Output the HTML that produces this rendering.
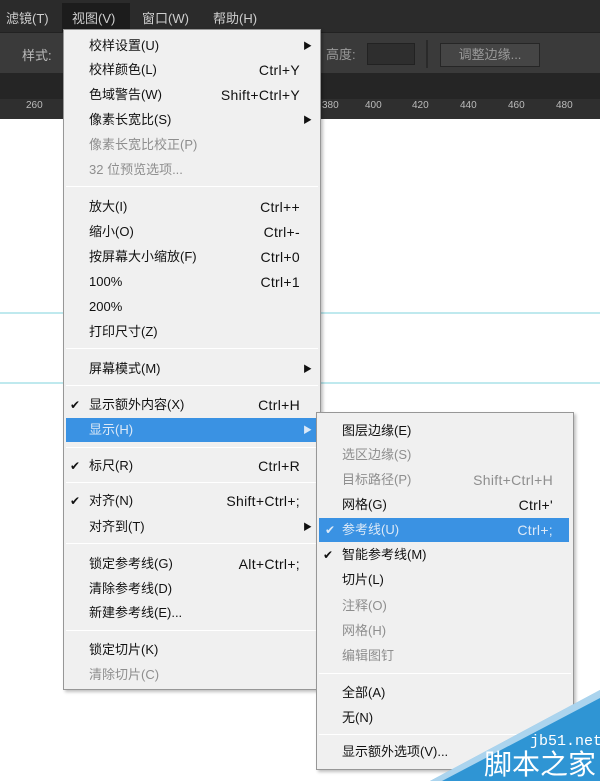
<!DOCTYPE html>
<html><head><meta charset="utf-8"><style>
*{margin:0;padding:0;box-sizing:border-box}
body{width:600px;height:781px;position:relative;overflow:hidden;background:#fff;font-family:"Liberation Sans","Noto Sans CJK SC",sans-serif;font-size:13px}
.abs{position:absolute}
.menu{position:absolute;background:#f0f0f0;border:1px solid #979797;box-shadow:2px 2px 3px rgba(0,0,0,.25)}
.it{position:absolute;left:0;right:0;height:22px;line-height:22px;color:#111;white-space:nowrap}
.it .t{position:absolute;left:25px}
.it .k{position:absolute;right:20px;font-size:14px;letter-spacing:0.3px}
.it .a{position:absolute;right:8px;font-size:9px}
.it .c{position:absolute;left:6px;font-size:12px}
.dis{color:#8e8e8e}
.hl{background:#3a92e3;color:#dce9f7}
.sep{position:absolute;left:2px;right:2px;height:1px;background:#a0a0a0;border-bottom:1px solid #fff}
.tk{position:absolute;top:100px;font-size:10px;color:#bbb}
</style></head><body>
<div class="abs" style="left:0;top:0;width:600px;height:32px;background:#2b2b2b"></div>
<div class="abs" style="left:62px;top:3px;width:68px;height:29px;background:#1c1c1c"></div>
<div class="abs" style="left:6px;top:8px;color:#cfcfcf;font-size:13px">滤镜(T)</div>
<div class="abs" style="left:72px;top:8px;color:#cfcfcf;font-size:13px">视图(V)</div>
<div class="abs" style="left:142px;top:8px;color:#cfcfcf;font-size:13px">窗口(W)</div>
<div class="abs" style="left:213px;top:8px;color:#cfcfcf;font-size:13px">帮助(H)</div>
<div class="abs" style="left:0;top:32px;width:600px;height:41px;background:#3a3a3a;border-top:1px solid #222"></div>
<div class="abs" style="left:22px;top:45px;color:#bbb">样式:</div>
<div class="abs" style="left:326px;top:44px;color:#999">高度:</div>
<div class="abs" style="left:367px;top:43px;width:48px;height:22px;background:#2e2e2e;border:1px solid #222"></div>
<div class="abs" style="left:426px;top:40px;width:2px;height:28px;background:#2a2a2a"></div>
<div class="abs" style="left:440px;top:43px;width:100px;height:24px;background:#454545;border:1px solid #262626;color:#999;text-align:center;line-height:22px">调整边缘...</div>
<div class="abs" style="left:0;top:73px;width:600px;height:26px;background:#252525"></div>
<div class="abs" style="left:0;top:99px;width:600px;height:20px;background:#2f2f2f"></div>
<div class="tk" style="left:26px">260</div>
<div class="tk" style="left:322px">380</div><div class="tk" style="left:365px">400</div><div class="tk" style="left:412px">420</div><div class="tk" style="left:460px">440</div><div class="tk" style="left:508px">460</div><div class="tk" style="left:556px">480</div>
<div class="abs" style="left:0;top:312px;width:600px;height:2px;background:#bfe9ee"></div>
<div class="abs" style="left:0;top:382px;width:600px;height:2px;background:#bfe9ee"></div>

<div class="menu" style="left:63px;top:29px;width:258px;height:661px">
<div class="it" style="top:5px"><span class="t">校样设置(U)</span><span class="a">▶</span></div>
<div class="it" style="top:29px"><span class="t">校样颜色(L)</span><span class="k">Ctrl+Y</span></div>
<div class="it" style="top:54px"><span class="t">色域警告(W)</span><span class="k">Shift+Ctrl+Y</span></div>
<div class="it" style="top:79px"><span class="t">像素长宽比(S)</span><span class="a">▶</span></div>
<div class="it dis" style="top:104px"><span class="t">像素长宽比校正(P)</span></div>
<div class="it dis" style="top:129px"><span class="t">32 位预览选项...</span></div>
<div class="sep" style="top:156px"></div>
<div class="it" style="top:166px"><span class="t">放大(I)</span><span class="k">Ctrl++</span></div>
<div class="it" style="top:191px"><span class="t">缩小(O)</span><span class="k">Ctrl+-</span></div>
<div class="it" style="top:216px"><span class="t">按屏幕大小缩放(F)</span><span class="k">Ctrl+0</span></div>
<div class="it" style="top:241px"><span class="t">100%</span><span class="k">Ctrl+1</span></div>
<div class="it" style="top:266px"><span class="t">200%</span></div>
<div class="it" style="top:291px"><span class="t">打印尺寸(Z)</span></div>
<div class="sep" style="top:318px"></div>
<div class="it" style="top:328px"><span class="t">屏幕模式(M)</span><span class="a">▶</span></div>
<div class="sep" style="top:355px"></div>
<div class="it" style="top:364px"><span class="c">✔</span><span class="t">显示额外内容(X)</span><span class="k">Ctrl+H</span></div>
<div class="it hl" style="top:388px;height:24px;line-height:24px;left:2px;right:4px"><span class="t" style="left:23px">显示(H)</span><span class="a" style="right:4px">▶</span></div>
<div class="sep" style="top:417px"></div>
<div class="it" style="top:425px"><span class="c">✔</span><span class="t">标尺(R)</span><span class="k">Ctrl+R</span></div>
<div class="sep" style="top:452px"></div>
<div class="it" style="top:460px"><span class="c">✔</span><span class="t">对齐(N)</span><span class="k">Shift+Ctrl+;</span></div>
<div class="it" style="top:486px"><span class="t">对齐到(T)</span><span class="a">▶</span></div>
<div class="sep" style="top:513px"></div>
<div class="it" style="top:523px"><span class="t">锁定参考线(G)</span><span class="k">Alt+Ctrl+;</span></div>
<div class="it" style="top:548px"><span class="t">清除参考线(D)</span></div>
<div class="it" style="top:572px"><span class="t">新建参考线(E)...</span></div>
<div class="sep" style="top:600px"></div>
<div class="it" style="top:609px"><span class="t">锁定切片(K)</span></div>
<div class="it dis" style="top:634px"><span class="t">清除切片(C)</span></div>
</div>

<div class="menu" style="left:316px;top:412px;width:258px;height:358px">
<div class="it" style="top:7px"><span class="t">图层边缘(E)</span></div>
<div class="it dis" style="top:31px"><span class="t">选区边缘(S)</span></div>
<div class="it dis" style="top:56px"><span class="t">目标路径(P)</span><span class="k">Shift+Ctrl+H</span></div>
<div class="it" style="top:81px"><span class="t">网格(G)</span><span class="k">Ctrl+'</span></div>
<div class="it hl" style="top:105px;height:24px;line-height:24px;left:2px;right:4px"><span class="c">✔</span><span class="t" style="left:23px">参考线(U)</span><span class="k" style="right:16px">Ctrl+;</span></div>
<div class="it" style="top:131px"><span class="c">✔</span><span class="t">智能参考线(M)</span></div>
<div class="it" style="top:156px"><span class="t">切片(L)</span></div>
<div class="it dis" style="top:182px"><span class="t">注释(O)</span></div>
<div class="it dis" style="top:207px"><span class="t">网格(H)</span></div>
<div class="it dis" style="top:232px"><span class="t">编辑图钉</span></div>
<div class="sep" style="top:260px"></div>
<div class="it" style="top:269px"><span class="t">全部(A)</span></div>
<div class="it" style="top:294px"><span class="t">无(N)</span></div>
<div class="sep" style="top:321px"></div>
<div class="it" style="top:328px"><span class="t">显示额外选项(V)...</span></div>
</div>

<svg class="abs" style="left:430px;top:690px" width="170" height="91"><polygon points="170,0 170,91 0,91" fill="#2f95d4"/><polygon points="170,0 0,91 12,91 170,8" fill="#fff" opacity=".6"/></svg>
<div class="abs" style="left:530px;top:733px;color:#fff;font-size:15px;font-family:'Liberation Mono',monospace">jb51.net</div>
<div class="abs" style="left:484px;top:747px;color:#fff;font-size:28px;line-height:32px;font-family:'Noto Sans CJK SC',sans-serif">脚本之家</div>
</body></html>
